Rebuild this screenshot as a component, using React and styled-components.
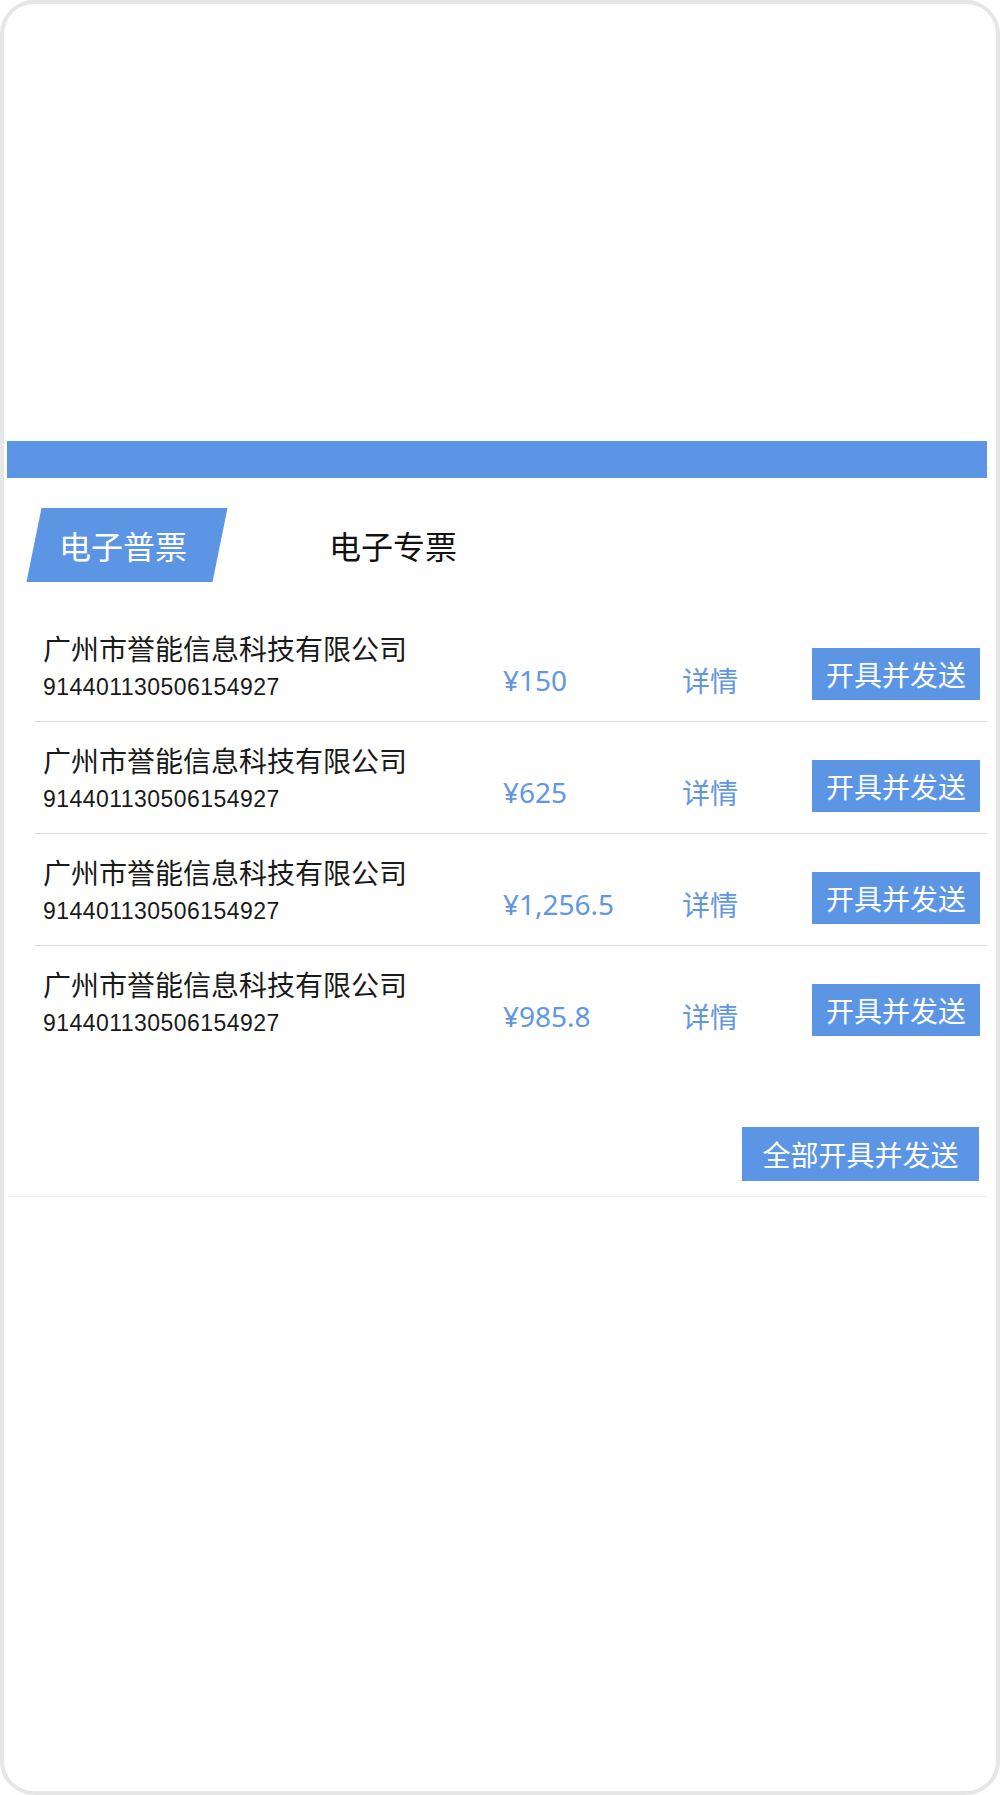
import React from 'react';
import styled, { createGlobalStyle } from 'styled-components';

const GlobalStyle = createGlobalStyle`
  html, body {
    margin: 0;
    padding: 0;
    background: #ffffff;
  }

  body {
    font-family: 'Noto Sans', 'Noto Sans CJK SC', sans-serif;
  }
`;

const BLUE = '#5c95e4';

const Frame = styled.div`
  width: 1000px;
  height: 1795px;
  box-sizing: border-box;
  border: 4px solid #e6e6e6;
  border-radius: 34px;
  background: #ffffff;
  padding: 437px 9px 0 3px;
  overflow: hidden;
`;

const Card = styled.section`
  border-bottom: 1px solid #f2f2f2;
`;

const TopBar = styled.div`
  height: 37px;
  background: ${BLUE};
`;

const Tabs = styled.div`
  display: flex;
  gap: 80px;
  height: 74px;
  margin-top: 30px;
  padding-left: 27px;
`;

const Tab = styled.div`
  position: relative;
  width: 186px;
  display: flex;
  align-items: center;
  justify-content: center;
  padding-right: ${({ $active }) => ($active ? '8px' : '0')};
  box-sizing: border-box;
  font-family: 'Noto Sans CJK SC', sans-serif;
  font-size: 32px;
  color: ${({ $active }) => ($active ? '#ffffff' : '#111111')};
  cursor: pointer;

  &::before {
    content: '';
    position: absolute;
    inset: 0;
    background: ${({ $active }) => ($active ? BLUE : 'transparent')};
    transform: skewX(-11.5deg);
    z-index: 0;
  }

  span {
    position: relative;
    z-index: 1;
  }
`;

const List = styled.div`
  margin: 28px 0 0 28px;
`;

const Row = styled.div`
  display: grid;
  grid-template-columns: 460px 179px 130px 168px;
  align-items: end;
  padding: 20px 7px 21px 8px;

  &:not(:last-child) {
    border-bottom: 1px solid #dadada;
  }
`;

const Company = styled.div`
  display: flex;
  flex-direction: column;
  gap: 8px;
`;

const CompanyName = styled.div`
  font-family: 'Noto Sans CJK SC', sans-serif;
  font-size: 28px;
  line-height: 36px;
  color: #1a1a1a;
  white-space: nowrap;
`;

const TaxNo = styled.div`
  font-family: 'Liberation Sans', Arial, sans-serif;
  font-size: 23px;
  letter-spacing: 0.45px;
  line-height: 26px;
  color: #1a1a1a;
`;

const Amount = styled.div`
  font-family: 'Noto Sans', sans-serif;
  font-size: 28px;
  line-height: 40px;
  color: #6296e2;
`;

const DetailLink = styled.a`
  font-family: 'Noto Sans CJK SC', sans-serif;
  font-size: 28px;
  line-height: 40px;
  color: #6296e2;
  text-decoration: none;
  cursor: pointer;
`;

const ActionButton = styled.button`
  height: ${({ $tall }) => ($tall ? '54px' : '52px')};
  width: ${({ $wide }) => ($wide ? '237px' : '168px')};
  border: none;
  border-radius: 0;
  background: ${BLUE};
  color: #ffffff;
  font-family: 'Noto Sans CJK SC', sans-serif;
  font-size: 28px;
  padding: 0;
  cursor: pointer;
`;

const Footer = styled.div`
  display: flex;
  justify-content: flex-end;
  padding: 70px 8px 15px 0;
`;

const invoices = [
  { name: '广州市誉能信息科技有限公司', taxNo: '914401130506154927', amount: '¥150' },
  { name: '广州市誉能信息科技有限公司', taxNo: '914401130506154927', amount: '¥625' },
  { name: '广州市誉能信息科技有限公司', taxNo: '914401130506154927', amount: '¥1,256.5' },
  { name: '广州市誉能信息科技有限公司', taxNo: '914401130506154927', amount: '¥985.8' },
];

const App = () => {
  return (
    <>
      <GlobalStyle />
      <Frame>
        <Card>
          <TopBar />
          <Tabs>
            <Tab $active>
              <span>电子普票</span>
            </Tab>
            <Tab>
              <span>电子专票</span>
            </Tab>
          </Tabs>
          <List>
            {invoices.map((item, i) => (
              <Row key={i}>
                <Company>
                  <CompanyName>{item.name}</CompanyName>
                  <TaxNo>{item.taxNo}</TaxNo>
                </Company>
                <Amount>{item.amount}</Amount>
                <DetailLink>详情</DetailLink>
                <ActionButton>开具并发送</ActionButton>
              </Row>
            ))}
          </List>
          <Footer>
            <ActionButton $wide $tall>全部开具并发送</ActionButton>
          </Footer>
        </Card>
      </Frame>
    </>
  );
};

export default App;
